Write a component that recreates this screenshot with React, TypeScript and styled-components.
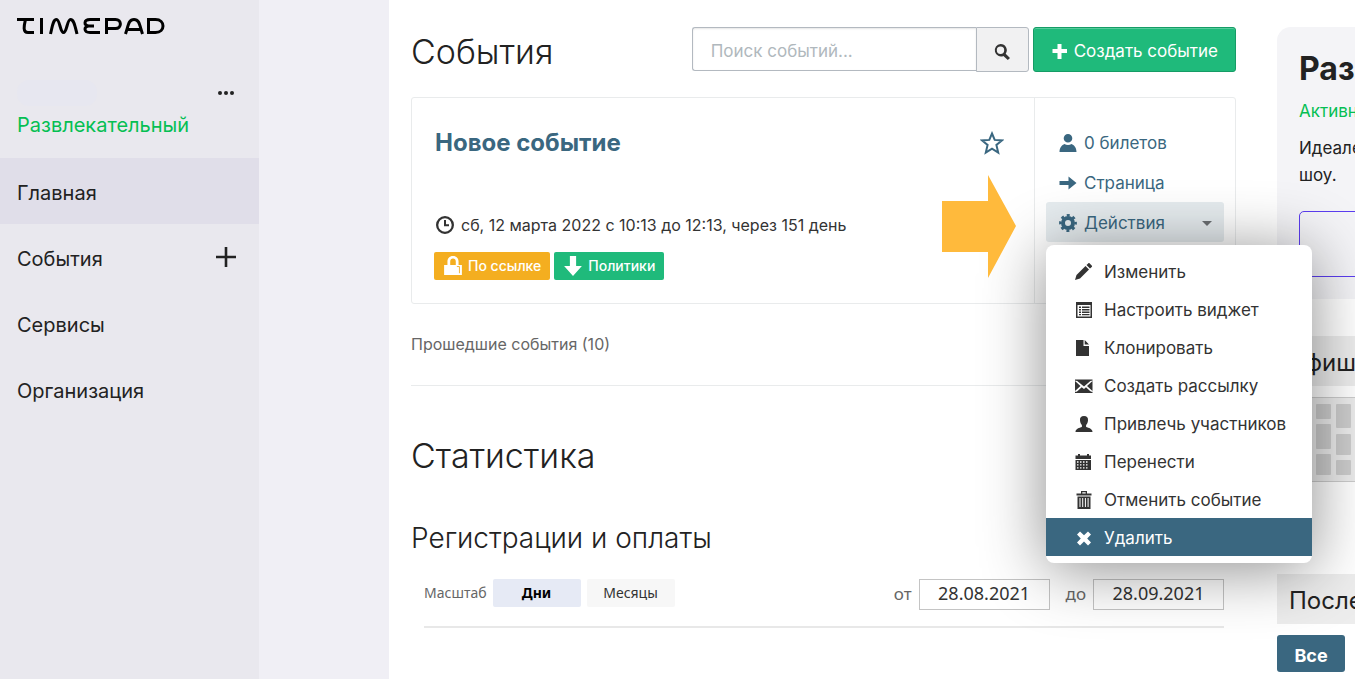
import React from "react";
import styled, { createGlobalStyle, css } from "styled-components";

const GlobalStyle = createGlobalStyle`
  *, *::before, *::after { box-sizing: border-box; }
  body {
    margin: 0;
    background: #fff;
    color: #222;
    font-family: Inter, "Liberation Sans", sans-serif;
    font-size: 17px;
    line-height: 24px;
  }
  h1, h2, h3, p, ul { margin: 0; padding: 0; font-weight: 400; }
  ul { list-style: none; }
  a { color: inherit; text-decoration: none; }
  button, input { font: inherit; color: inherit; }
  svg { display: block; flex: none; }
`;

const blue = "#3a6780";
const green = "#1fba7b";

const Page = styled.div`
  display: grid;
  grid-template-columns: 259px 130px minmax(0, 1fr) 78px;
  min-height: 100vh;
  overflow: hidden;
`;

/* Sidebar */

const Sidebar = styled.aside`
  background: #e9e8ee;
`;

const Logo = styled.a`
  display: block;
  padding: 17px 17px 0;
`;

const Account = styled.div`
  padding: 44px 17px 17px;
`;

const AccountRow = styled.div`
  display: flex;
  align-items: center;
  justify-content: space-between;
  height: 28px;
  padding-right: 7px;
`;

const NameBlot = styled.span`
  width: 80px;
  height: 26px;
  border-radius: 12px;
  background: #e7e7f0;
`;

const IconButton = styled.button`
  display: flex;
  padding: 0;
  border: 0;
  background: none;
  cursor: pointer;
`;

const Plan = styled.a`
  display: block;
  padding-top: 2px;
  font-size: 20px;
  line-height: 32px;
  color: #05bf53;
`;

const NavItem = styled.li<{ $active?: boolean }>`
  display: flex;
  align-items: center;
  justify-content: space-between;
  height: 66px;
  padding: 0 23px 0 17px;
  font-size: 20px;
  background: ${(p) => (p.$active ? "#e0dee9" : "transparent")};
`;

const NavLink = styled.a`
  padding-top: 4px;
`;

const Gutter = styled.div`
  background: #f0eff5;
`;

/* Main column */

const Main = styled.main`
  padding: 27px 41px 24px 22px;
`;

const Header = styled.header`
  display: flex;
  align-items: flex-end;
  justify-content: space-between;
`;

const Title = styled.h1`
  font-size: 34px;
  font-weight: 300;
  line-height: 40px;
`;

const Tools = styled.div`
  display: flex;
  gap: 4px;
`;

const Search = styled.form`
  display: flex;
  align-items: flex-start;
`;

const SearchInput = styled.input`
  width: 284px;
  height: 44px;
  padding: 3px 18px 0;
  border: 1px solid #b3b9c0;
  border-right: 0;
  border-radius: 3px 0 0 3px;
  box-shadow: inset 0 1px 2px rgba(0, 0, 0, 0.1);
  background: #fff;
  &::placeholder { color: #b0b8bd; opacity: 1; }
`;

const SearchButton = styled.button`
  display: flex;
  align-items: center;
  justify-content: center;
  width: 53px;
  height: 45px;
  padding: 5px 0 0;
  border: 1px solid #b3b9c0;
  border-radius: 0 3px 3px 0;
  background: #f1f1f2;
  color: #333;
`;

const CreateButton = styled.button`
  display: flex;
  align-items: center;
  gap: 5px;
  height: 45px;
  padding: 3px 17px 0;
  border: 1px solid #159c66;
  border-radius: 3px;
  box-shadow: inset 0 1px 0 rgba(255, 255, 255, 0.25);
  background: ${green};
  color: #fff;
`;

const EventCard = styled.article`
  position: relative;
  display: grid;
  grid-template-columns: minmax(0, 1fr) 201px;
  margin-top: 25px;
  border: 1px solid #e9ebec;
  border-radius: 3px;
`;

const EventBody = styled.div`
  padding: 29px 30px 23px 22px;
`;

const EventHead = styled.div`
  display: flex;
  align-items: center;
  justify-content: space-between;
`;

const EventTitle = styled.h2`
  padding-left: 1px;
  font-size: 24px;
  line-height: 32px;
  font-weight: 700;
  color: ${blue};
`;

const When = styled.p`
  display: flex;
  align-items: center;
  gap: 7px;
  margin-top: 54px;
  padding-left: 2px;
  color: #333;
  font-size: 16px;
`;

const Tags = styled.div`
  display: flex;
  gap: 4px;
  margin-top: 15px;
`;

const Tag = styled.a<{ $color: string }>`
  display: flex;
  align-items: center;
  gap: 5px;
  height: 28px;
  padding: 0 9px;
  border-radius: 2px;
  background: ${(p) => p.$color};
  color: #fff;
  font-size: 14px;
  font-weight: 500;
`;

const EventSide = styled.div`
  padding: 24px 11px 0;
  border-left: 1px solid #e9ebec;
  color: ${blue};
`;

const sideRow = css`
  display: flex;
  align-items: center;
  gap: 7px;
  width: 100%;
  height: 40px;
  padding: 2px 12px 0 13px;
  color: ${blue};
`;

const SideLink = styled.a`
  ${sideRow}
`;

const Dropdown = styled.div`
  position: relative;
`;

const DropdownButton = styled.button`
  ${sideRow}
  border: 0;
  border-radius: 3px;
  background: #e6ecef;
  text-align: left;
`;

const Caret = styled.span`
  margin-left: auto;
  border: 5px solid transparent;
  border-top-color: #6b6f72;
  border-bottom: 0;
`;

const Menu = styled.ul`
  position: absolute;
  z-index: 10;
  top: 43px;
  left: 0;
  width: 266px;
  padding: 7px 0;
  border-radius: 8px;
  background: #fff;
  box-shadow: 0 6px 64px rgba(0, 0, 0, 0.45);
`;

const MenuItem = styled.button<{ $active?: boolean }>`
  display: flex;
  align-items: center;
  gap: 11px;
  width: 100%;
  height: 38px;
  padding: 2px 29px 0;
  border: 0;
  background: ${(p) => (p.$active ? blue : "none")};
  color: ${(p) => (p.$active ? "#fff" : "#333")};
  text-align: left;
  white-space: nowrap;
`;

const Pointer = styled.svg`
  position: absolute;
  z-index: 11;
  top: 77px;
  right: 219px;
`;

const PastLink = styled.a`
  display: block;
  padding: 28px 0 29px;
  border-bottom: 1px solid #e9ebec;
  color: #666;
  font-size: 16px;
`;

const Section = styled.h2`
  margin-top: 46px;
  font-size: 34px;
  font-weight: 300;
  line-height: 48px;
`;

const Subsection = styled.h3`
  margin-top: 38px;
  font-size: 28px;
  font-weight: 300;
  line-height: 40px;
`;

const Filters = styled.div`
  display: flex;
  align-items: flex-start;
  justify-content: space-between;
  margin: 21px 12px 0 13px;
  padding-bottom: 16px;
  border-bottom: 2px solid #e8e8e8;
  font-family: "Noto Sans", sans-serif;
  color: #666;
`;

const Group = styled.div`
  display: flex;
  align-items: center;
  gap: 6px;
  font-size: 14px;
`;

const Scale = styled.button<{ $active?: boolean }>`
  width: 88px;
  height: 28px;
  padding: 0;
  border: 0;
  border-radius: 2px;
  background: ${(p) => (p.$active ? "#e6eaf5" : "#f7f7f7")};
  color: ${(p) => (p.$active ? "#000" : "#333")};
  font-weight: ${(p) => (p.$active ? 700 : 400)};
`;

const DateField = styled.label`
  display: flex;
  align-items: baseline;
  gap: 7px;
  margin-left: 10px;
  font-size: 17px;
`;

const DateInput = styled.input`
  width: 131px;
  height: 31px;
  padding: 0 0 4px;
  border: 1px solid #c4c4c4;
  background: #fff;
  color: #333;
  font-size: 18px;
  text-align: center;
`;

/* Right column */

const Right = styled.aside`
  min-width: 0;
  padding-top: 27px;
`;

const RightInner = styled.div`
  width: 340px;
`;

const Tariff = styled.section`
  height: 272px;
  padding: 22px 22px 0;
  border-radius: 14px 14px 0 0;
  background: #f4f4f7;
`;

const TariffName = styled.h2`
  font-size: 32px;
  line-height: 40px;
  font-weight: 700;
`;

const TariffState = styled.p`
  margin: 10px 0 12px;
  color: #05bf53;
`;

const TariffText = styled.p`
  line-height: 27px;
`;

const TariffButton = styled.button`
  width: 100%;
  height: 66px;
  margin-top: 22px;
  border: 1px solid #5b3df0;
  border-radius: 5px;
  background: none;
`;

const Bar = styled.h2`
  height: 50px;
  padding: 0 12px;
  background: #ededed;
  font-size: 24px;
  line-height: 54px;
`;

const Poster = styled.section`
  margin-top: 37px;
`;

const Seats = styled.div`
  margin-top: 11px;
  padding-left: 19px;
  border: solid #ccc;
  border-width: 1px 0;
  background: #ececec;
`;

const Latest = styled.section`
  margin-top: 92px;
`;

const AllButton = styled.button`
  width: 68px;
  height: 37px;
  margin-top: 11px;
  padding: 4px 0 0;
  border: 0;
  border-radius: 3px;
  background: ${blue};
  color: #fff;
  font-size: 18px;
  font-weight: 700;
`;

const icons = {
  pencil: (
    <>
      <path d="M0 17l1.500-5L10.500 3l3.500 3.500L5 15.500z" />
      <path d="M11.500 2l1.700-1.600c.5-.5 1-.5 1.500 0l2 2c.5.500.5 1 0 1.500L15 5.500z" />
    </>
  ),
  list: (
    <>
      <path fillRule="evenodd" d="M1 1h16v16H1zM2.500 4v11.500h13V4z" />
      <path d="M4 5.500h2V7H4zM7 5.500h7.500V7H7zM4 8h2v1.500H4zM7 8h7.500v1.500H7zM4 10.500h2V12H4zM7 10.500h7.500V12H7zM4 13h2v1.200H4zM7 13h7.500v1.200H7z" />
    </>
  ),
  file: <path d="M1 1h7.500v6H14v10H1zM9.700 1L14 5.600H9.700z" />,
  mail: (
    <>
      <path d="M1 3h15.500L9 9.500zM0 4l5.500 5L0 14zM17.500 4v10L12 9zM1 15.500l5.700-5.300L9 12l2-1.800 5.700 5.300z" />
      <path d="M0 2.500h17.500v1.300H0zM0 14.700h17.500V16H0z" />
    </>
  ),
  bust: (
    <path d="M9 1c3 0 4.300 1.700 4 4.500-.2 2-1 3.600-1.900 4.500v2c2.400.8 6.400 1.600 6.400 5H.5c0-3.400 4-4.200 6.400-5v-2C6 9.100 5.200 7.500 5 5.500 4.700 2.700 6 1 9 1z" />
  ),
  calendar: (
    <>
      <path d="M.5 2.500H3V1h2v1.500h7V1h2v1.500h2V6H.5z" />
      <path
        fillRule="evenodd"
        d="M.5 7H16v10H.5zM2 8.300v1.400h1.500V8.300zm3 0v1.400h1.500V8.300zm3 0v1.400h1.500V8.300zm3 0v1.400h1.500V8.300zM2 11.200v1.400h1.500v-1.400zm3 0v1.400h1.500v-1.400zm3 0v1.400h1.500v-1.400zm3 0v1.400h1.500v-1.400zM2 14.200v1.400h1.500v-1.400zm3 0v1.400h1.500v-1.400zm3 0v1.400h1.500v-1.400zm3 0v1.400h1.500v-1.400z"
      />
    </>
  ),
  trash: (
    <>
      <path fillRule="evenodd" d="M1.500 2.500H6V0h6v2.500h4.500v2h-15zM7.300 1.200v1.300h3.400V1.200z" />
      <path
        fillRule="evenodd"
        d="M2.500 5.500h13V18h-13zM4.500 7v9h1V7zm2.700 0v9h1V7zm2.700 0v9h1V7zm2.700 0v9h1V7z"
      />
    </>
  ),
  cross: (
    <path d="M5 2.500L9 6.300l4-3.800 3 3L12.200 9.400l3.800 4-3 3-4-3.900-4 3.900-3-3 3.800-4L2 5.500z" />
  ),
  search: (
    <path
      fillRule="evenodd"
      d="M7.500 1a6.200 6.200 0 0 1 5.200 9.700l4.300 4.200-2.200 2.200-4.400-4.200A6.200 6.200 0 1 1 7.500 1zm0 2.600a3.700 3.700 0 1 0 0 7.400 3.700 3.700 0 0 0 0-7.400z"
    />
  ),
  plus: <path d="M6.500 2h4v5H16v4h-5.500v6h-4v-6H1.500V7h5z" />,
  clock: (
    <path
      fillRule="evenodd"
      d="M9 0a9 9 0 1 1 0 18A9 9 0 0 1 9 0zm0 2.300a6.700 6.700 0 1 0 0 13.400A6.700 6.700 0 0 0 9 2.300zM8 4h2v4.200h3v2H8z"
    />
  ),
  lock: (
    <>
      <path
        fillRule="evenodd"
        d="M9 0c3.300 0 5 2.300 5 5v3h3v9H1V8h3V5c0-2.700 1.700-5 5-5zm0 2.300C7.500 2.300 6.500 3.500 6.500 5v3h5V5c0-1.500-1-2.700-2.500-2.700z"
      />
      <path d="M12.500 9.500h2.300v6" fill="none" stroke="#f4ae20" strokeWidth="0.800" />
    </>
  ),
  down: <path d="M6.200 0h5.600v9H17l-8 9-8-9h5.200z" />,
  person: (
    <path d="M9 0a4.300 4.300 0 1 1 0 8.600A4.300 4.300 0 0 1 9 0zM.5 18c0-4.500 2.500-7 5-8 1 .7 2.200 1 3.500 1s2.500-.3 3.500-1c2.500 1 5 3.500 5 8z" />
  ),
  right: <path d="M.5 7h9V2.500l8 6.500-8 6.500V11h-9z" />,
  gear: (
    <>
      <circle cx="9" cy="9" r="5" fill="none" stroke="currentColor" strokeWidth="4" />
      <circle
        cx="9"
        cy="9"
        r="7.700"
        fill="none"
        stroke="currentColor"
        strokeWidth="2.400"
        strokeDasharray="3.020 3.028"
        strokeDashoffset="1.510"
      />
    </>
  ),
};

type IconName = keyof typeof icons;

const Icon = ({ name, size = 18 }: { name: IconName; size?: number }) => (
  <svg width={size} height={size} viewBox="0 0 18 18" fill="currentColor" aria-hidden="true">
    {icons[name]}
  </svg>
);

const menu: { icon: IconName; label: string; active?: boolean }[] = [
  { icon: "pencil", label: "Изменить" },
  { icon: "list", label: "Настроить виджет" },
  { icon: "file", label: "Клонировать" },
  { icon: "mail", label: "Создать рассылку" },
  { icon: "bust", label: "Привлечь участников" },
  { icon: "calendar", label: "Перенести" },
  { icon: "trash", label: "Отменить событие" },
  { icon: "cross", label: "Удалить", active: true },
];

/* Top and height of each block, for the even and the odd columns */
const seatColumns = [
  [[6, 24], [36, 21], [62, 15]],
  [[6, 15], [26, 25], [56, 21]],
];

export default function App() {
  return (
    <>
      <GlobalStyle />
      <Page>
        <Sidebar>
          <Logo href="#" aria-label="Timepad">
            <svg width="148" height="18" viewBox="0 0 148 18" fill="none" stroke="#000" strokeWidth="3">
              <path d="M0 2.500H17M8.500 2.500C7.500 7 5 15.500 11 15.500H17" />
              <path d="M24.500 1V17" />
              <path d="M33.500 17C35.500 9 36 2.500 39.500 2.500S43 15.500 46.500 15.500 50 2.500 53.500 2.500 58 9 60 17" />
              <path d="M83 2.500H73C66.500 2.500 66.500 9 72 9H77M72 9C66.500 9 66.500 15.500 73 15.500H83" />
              <path d="M89.500 17V2.500H98.500C105 2.500 105 11.500 98.500 11.500H89.500" />
              <path d="M108.500 17C111.500 8 111.500 2.500 117 2.500S122.500 8 125.500 17M110.500 12.500H123.500" />
              <path d="M131.500 2.500H138.500C148.500 2.500 148.500 15.500 138.500 15.500H131.500Z" />
            </svg>
          </Logo>
          <Account>
            <AccountRow>
              <NameBlot />
              <IconButton aria-label="Ещё">
                <svg width="18" height="6" viewBox="0 0 18 6" fill="#222">
                  <circle cx="3" cy="3" r="2" />
                  <circle cx="9" cy="3" r="2" />
                  <circle cx="15" cy="3" r="2" />
                </svg>
              </IconButton>
            </AccountRow>
            <Plan href="#">Развлекательный</Plan>
          </Account>
          <nav>
            <ul>
              <NavItem $active>
                <NavLink href="#">Главная</NavLink>
              </NavItem>
              <NavItem>
                <NavLink href="#">События</NavLink>
                <IconButton aria-label="Добавить событие">
                  <svg width="20" height="20" viewBox="0 0 20 20" stroke="#222" strokeWidth="2.600">
                    <path d="M10 0V20M0 10H20" />
                  </svg>
                </IconButton>
              </NavItem>
              <NavItem>
                <NavLink href="#">Сервисы</NavLink>
              </NavItem>
              <NavItem>
                <NavLink href="#">Организация</NavLink>
              </NavItem>
            </ul>
          </nav>
        </Sidebar>
        <Gutter />
        <Main>
          <Header>
            <Title>События</Title>
            <Tools>
              <Search>
                <SearchInput type="text" placeholder="Поиск событий..." aria-label="Поиск событий" />
                <SearchButton type="button" aria-label="Найти">
                  <Icon name="search" />
                </SearchButton>
              </Search>
              <CreateButton>
                <Icon name="plus" />
                Создать событие
              </CreateButton>
            </Tools>
          </Header>

          <EventCard>
            <EventBody>
              <EventHead>
                <EventTitle>
                  <a href="#">Новое событие</a>
                </EventTitle>
                <IconButton aria-label="В избранное">
                  <svg width="24" height="24" viewBox="0 0 24 24" fill="none" stroke={blue} strokeWidth="2">
                    <path d="M12 2.500l2.700 6.400 7.300.5-5.600 4.600 1.800 7.500-6.200-3.900-6.200 3.900 1.800-7.500L2 9.400l7.300-.5z" />
                  </svg>
                </IconButton>
              </EventHead>
              <When>
                <Icon name="clock" />
                сб, 12 марта 2022 с 10:13 до 12:13, через 151 день
              </When>
              <Tags>
                <Tag href="#" $color="#f4ae20">
                  <Icon name="lock" size={20} />
                  По ссылке
                </Tag>
                <Tag href="#" $color={green}>
                  <Icon name="down" size={20} />
                  Политики
                </Tag>
              </Tags>
            </EventBody>
            <EventSide>
              <SideLink href="#">
                <Icon name="person" />0 билетов
              </SideLink>
              <SideLink href="#">
                <Icon name="right" />
                Страница
              </SideLink>
              <Dropdown>
                <DropdownButton aria-expanded="true">
                  <Icon name="gear" />
                  Действия
                  <Caret />
                </DropdownButton>
                <Menu>
                  {menu.map((item) => (
                    <li key={item.label}>
                      <MenuItem $active={item.active}>
                        <Icon name={item.icon} />
                        {item.label}
                      </MenuItem>
                    </li>
                  ))}
                </Menu>
              </Dropdown>
            </EventSide>
            <Pointer width="74" height="103" viewBox="0 0 74 103" fill="#ffba3c" aria-hidden="true">
              <path d="M0 26H46V0L74 51 46 103V77H0Z" />
            </Pointer>
          </EventCard>

          <PastLink href="#">Прошедшие события (10)</PastLink>

          <Section>Статистика</Section>
          <Subsection>Регистрации и оплаты</Subsection>
          <Filters>
            <Group>
              Масштаб
              <Scale $active>Дни</Scale>
              <Scale>Месяцы</Scale>
            </Group>
            <Group>
              <DateField>
                от
                <DateInput type="text" defaultValue="28.08.2021" />
              </DateField>
              <DateField>
                до
                <DateInput type="text" defaultValue="28.09.2021" />
              </DateField>
            </Group>
          </Filters>
        </Main>
        <Right>
          <RightInner>
            <Tariff>
              <TariffName>Развлекательный</TariffName>
              <TariffState>Активный тариф</TariffState>
              <TariffText>
                Идеален для концертов и
                <br />
                шоу.
              </TariffText>
              <TariffButton aria-label="Подробнее о тарифе" />
            </Tariff>
            <Poster>
              <Bar>Афиша</Bar>
              <Seats>
                <svg width="300" height="83" viewBox="0 0 300 83" fill="#cdcdcd" aria-hidden="true">
                  {Array.from({ length: 15 }, (_, i) =>
                    seatColumns[i % 2].map(([y, h]) => (
                      <rect key={`${i}-${y}`} x={i * 20} y={y} width="15" height={h} rx="1" />
                    ))
                  )}
                </svg>
              </Seats>
            </Poster>
            <Latest>
              <Bar>Последние заказы</Bar>
              <AllButton>Все</AllButton>
            </Latest>
          </RightInner>
        </Right>
      </Page>
    </>
  );
}
